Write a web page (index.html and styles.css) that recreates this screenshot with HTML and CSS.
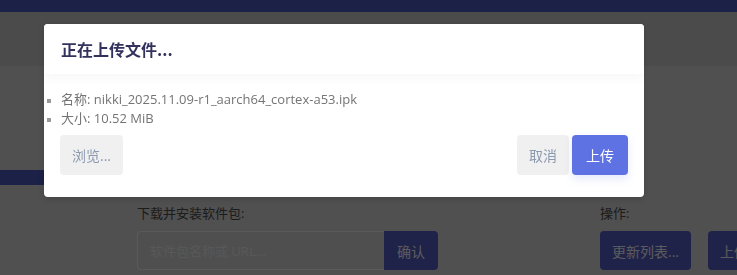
FILE: index.html
```html
<!DOCTYPE html>
<html lang="zh">
<head>
<meta charset="utf-8">
<title>上传文件</title>
<link rel="stylesheet" href="styles.css">
</head>
<body>
<div class="page">
  <div class="topbar"></div>
  <div class="header-band"></div>
  <div class="main">
    <aside class="sidebar">
      <div class="side-active"></div>
    </aside>
    <section class="content">
      <div class="group group-install">
        <label class="label">下载并安装软件包:</label>
        <div class="input-row">
          <input class="text-input" type="text" placeholder="软件包名称或 URL...">
          <button class="btn-dark btn-confirm">确认</button>
        </div>
      </div>
      <div class="group group-actions">
        <label class="label">操作:</label>
        <div class="action-row">
          <button class="btn-dark">更新列表...</button>
          <button class="btn-dark">上传软件包...</button>
        </div>
      </div>
    </section>
  </div>
</div>

<div class="overlay"></div>

<div class="modal">
  <div class="modal-header">
    <h4 class="modal-title">正在上传文件...</h4>
  </div>
  <div class="modal-body">
    <ul class="file-info">
      <li>名称: nikki_2025.11.09-r1_aarch64_cortex-a53.ipk</li>
      <li>大小: 10.52 MiB</li>
    </ul>
    <div class="modal-actions">
      <button class="btn btn-light">浏览...</button>
      <div class="right-actions">
        <button class="btn btn-light">取消</button>
        <button class="btn btn-primary">上传</button>
      </div>
    </div>
  </div>
</div>
</body>
</html>
```

FILE: styles.css
```css
html, body {
  margin: 0;
  padding: 0;
}
body {
  width: 737px;
  height: 275px;
  overflow: hidden;
  font-family: "Open Sans", "Noto Sans CJK SC", sans-serif;
  background: #d2d2d2;
  position: relative;
}
.page {
  display: flex;
  flex-direction: column;
  height: 275px;
}
.topbar {
  height: 12px;
  background: #4a57bb;
}
.header-band {
  height: 54px;
  background: #c5c5c5;
}
.main {
  flex: 1;
  display: flex;
}
.sidebar {
  width: 137px;
  flex-shrink: 0;
  padding-top: 104px;
  box-sizing: border-box;
}
.side-active {
  height: 15px;
  width: 120px;
  background: #4a57bb;
}
.content {
  display: flex;
  flex-shrink: 0;
  padding-top: 137px;
}
.group {
  display: flex;
  flex-direction: column;
  flex-shrink: 0;
}
.group-install {
  width: 463px;
}
.label {
  font-size: 13px;
  color: #4a4a4a;
  height: 20px;
  line-height: 20px;
  margin-bottom: 8px;
}
.input-row, .action-row {
  display: flex;
  height: 39px;
}
.action-row {
  gap: 17px;
}
.text-input {
  width: 247px;
  box-sizing: border-box;
  height: 39px;
  border: 1px solid #ededed;
  border-right: none;
  border-radius: 4px 0 0 4px;
  background: #d0d0d0;
  padding: 0 12px;
  font-family: "Open Sans", "Noto Sans CJK SC", sans-serif;
  font-size: 13px;
  outline: none;
}
.text-input::placeholder {
  color: #e6e6e6;
}
.btn-dark {
  background: #525cc0;
  color: #ececf6;
  border: none;
  border-radius: 4px;
  font-family: "Open Sans", "Noto Sans CJK SC", sans-serif;
  font-size: 14px;
  padding: 0 12px;
  height: 39px;
  white-space: nowrap;
  flex-shrink: 0;
}
.btn-confirm {
  border-radius: 0 4px 4px 0;
  padding: 0 13px;
}

.overlay {
  position: fixed;
  inset: 0;
  background: rgba(0, 0, 0, 0.62);
}

.modal {
  position: absolute;
  left: 44px;
  top: 24px;
  width: 600px;
  background: #fff;
  border-radius: 4px;
  box-shadow: 0 2px 6px rgba(0, 0, 0, 0.15);
  overflow: hidden;
}
.modal-header {
  height: 50px;
  padding: 0 17px;
  display: flex;
  align-items: center;
  position: relative;
  z-index: 1;
  background: #fff;
  box-shadow: 0 4px 10px rgba(0, 0, 0, 0.035);
}
.modal-title {
  margin: 0;
  font-size: 16px;
  font-weight: 700;
  color: #32325d;
  font-family: "Noto Sans CJK SC", "Open Sans", sans-serif;
}
.modal-body {
  padding: 16px 16px 22px 16px;
}
.file-info {
  margin: 0 0 7px 0;
  padding-left: 1px;
  list-style: square;
  font-size: 13px;
  line-height: 19px;
  color: #747474;
}
.file-info li::marker {
  color: #9a9a9a;
  font-size: 10px;
}
.modal-actions {
  display: flex;
  justify-content: space-between;
  align-items: center;
}
.right-actions {
  display: flex;
  gap: 3px;
}
.btn {
  height: 40px;
  border: none;
  border-radius: 4px;
  padding: 0 12px;
  font-size: 14px;
  font-family: "Open Sans", "Noto Sans CJK SC", sans-serif;
}
.btn-light {
  background: #f0f0f0;
  color: #8c9ab0;
}
.btn-primary {
  background: #5e72e4;
  color: #fff;
  padding: 0 14px;
  box-shadow: 0 4px 8px rgba(94, 114, 228, 0.15);
}
```
